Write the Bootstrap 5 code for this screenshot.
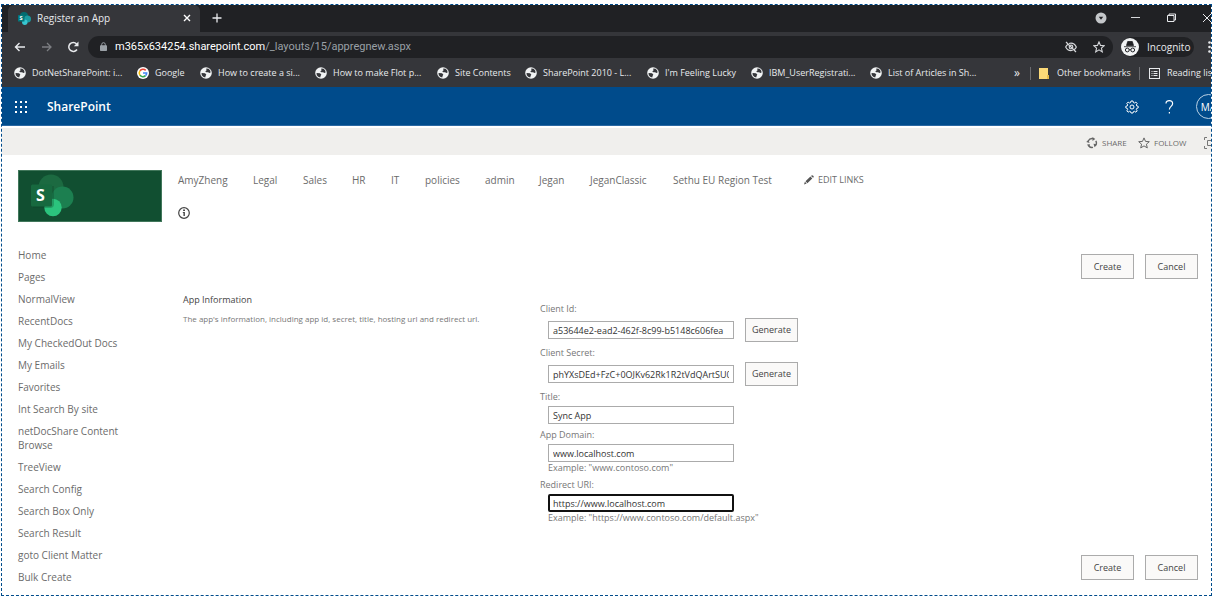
<!DOCTYPE html>
<html lang="en">
<head>
<meta charset="utf-8">
<meta name="viewport" content="width=device-width, initial-scale=1">
<title>Register an App</title>
<link href="https://cdn.jsdelivr.net/npm/bootstrap@5.3.0/dist/css/bootstrap.min.css" rel="stylesheet">
<style>
body{font-family:"Open Sans","Noto Sans",sans-serif;font-size:10px;line-height:14px;color:#6b6b6b;background:#fff}
a{color:inherit;text-decoration:none}
svg{display:block;flex:none}
button{font:inherit;color:inherit}
.icon-btn{border:0;background:none;padding:0;line-height:1}
.window-frame{margin:4px 6px 1px 1px;border:1px dashed #004b8b;overflow:hidden;background:#fff}
.cols{display:grid;align-items:center;white-space:nowrap;flex:none}
/* browser chrome */
.tab-strip{background:#202124;height:27px;color:#e8eaed;padding-bottom:1px}
.page-tab{width:192px;margin-left:6px;margin-bottom:-1px;padding:0 9px 1px 10px;gap:6px;background:#35363a;border-radius:6px 6px 0 0}
.window-tools{grid-template-columns:36px 36px 35px 12px;margin-right:-3px}
.tool-row{background:#35363a;height:29px;color:#e8eaed;padding:0 0 0 12px}
.omnibox{background:#202124;border-radius:11px;height:22px;padding:0 8px 0 8px;font-family:Roboto,"Open Sans",sans-serif;font-size:11px;color:#9aa0a6}
.omnibox b{font-weight:400;color:#fff}
.incognito{background:#202124;border-radius:10px;height:20px;width:73px;margin:0 14px 0 8px}
.bookmark-row{background:#35363a;height:26px;color:#e8eaed;padding:0 0 2px 12px;font-size:9px}
.bookmark-list{grid-template-columns:123px 63px 115px 122px 88px 122px 104px 119px 110px}
.bookmark-list a{display:flex;align-items:center;gap:6px}
.bookmark-end{grid-template-columns:16px 9px 18px 82px 10px 18px 56px;margin-right:-12px}
.bookmark-end .more{font-size:12px}
.divider{width:1px;height:13px;background:#6b6c70}
/* suite bar */
.suite-bar{background:#004b8b;height:39px;border-bottom:1px solid #2a68a3;color:#fff;padding:1px 0 0 13px}
.suite-name{font-size:12px;font-weight:600}
.suite-tools{grid-template-columns:40px 31px 25px;margin-right:-10px}
.avatar{width:25px;height:25px;border:1px solid #b9d0e4;border-radius:50%;font-size:10px}
.ribbon{background:#f0efed;height:27px;margin-top:2px;padding-top:2px;font-size:8px}
.ribbon-tools{grid-template-columns:52px 66px 12px;margin-right:-5px}
/* site */
.site-head{padding:15px 13px 0 16px}
.site-logo{width:144px;height:52px;background:#114f31;border:1px solid #41775b}
.top-links{grid-template-columns:75px 50px 49px 39px 34px 60px 54px 51px 83px 131px auto;margin-top:3px}
.edit-links{font-size:9px}
.site-body{display:grid;grid-template-columns:165px 1fr;padding:26px 13px 11px 16px}
.side-links a{display:block;width:120px;margin-bottom:8px}
.side-links li:last-child a{margin-bottom:0}
.form-area{display:grid;grid-template-columns:357px 1fr}
.form-fields{padding-top:24px}
.form-about{padding-top:15px}
.push-btn{border:1px solid #ababab;background:#faf9f8;color:#444;border-radius:0;height:25px;width:53px;padding:0;font-size:9px;line-height:12px}
.app-title{color:#444;font-size:9px;line-height:12px;margin:0 0 8px;font-weight:400}
.app-note{font-size:8px;line-height:10px;color:#777}
.field{margin-bottom:5px;line-height:12px;font-size:9px;color:#777}
.field label{display:block;margin-bottom:3px}
.entry{display:flex;align-items:center;gap:11px;padding-left:8px}
.entry input{width:186px;height:18px;min-height:0;border:1px solid #ababab;border-radius:0;padding:0 4px;font-size:9px;line-height:14px;color:#333;background:#fff;box-shadow:none}
.entry .push-btn{height:24px}
.entry input:focus{border:2px solid #111;border-radius:2px;padding:0 3px;outline:0;color:#333;box-shadow:none}
.hint{padding-left:8px}
.actions{gap:11px}
.actions-start{padding-top:6px}
.actions-end{margin-top:26px}
</style>
</head>
<body>
<svg width="0" height="0" class="position-absolute" aria-hidden="true">
  <symbol id="globe" viewBox="0 0 12 12"><circle cx="6" cy="6" r="5.800" fill="#f1f3f4"/><path d="M1.500 6.100L5 6.300 6.300 7.600 5.600 8.900 5.200 10.600 3.200 9.800 1.800 8.200ZM6.200 1.400L8.600 1.800 10.200 3.600 10.600 5.600 9.200 6 8.200 5.200 6.300 5.300 5.200 4.300 6.500 3.500Z" fill="#35363a"/></symbol>
</svg>
<div class="window-frame">
  <header>
    <div class="tab-strip d-flex align-items-stretch">
      <div class="page-tab d-flex align-items-center">
        <svg width="13" height="13" viewBox="0 0 13 13"><circle cx="6" cy="4" r="4" fill="#036c70"/><circle cx="9.500" cy="7" r="3.500" fill="#1a9ba1"/><circle cx="6.800" cy="10.200" r="2.700" fill="#37c6d0"/><rect y="3" width="6.500" height="6.500" rx=".6" fill="#03787c"/><text x="1.600" y="8.300" font-size="5.500" font-weight="700" fill="#fff">S</text></svg>
        <span>Register an App</span>
        <button class="icon-btn ms-auto" aria-label="Close tab"><svg width="8" height="8" viewBox="0 0 8 8" stroke="#fff" stroke-width="1.400"><path d="M1 1l6 6M7 1l-6 6"/></svg></button>
      </div>
      <button class="icon-btn ms-2 ps-1" aria-label="New tab"><svg width="10" height="10" viewBox="0 0 10 10" stroke="#e8eaed" stroke-width="1.300"><path d="M5 .5v9M.5 5h9"/></svg></button>
      <div class="window-tools cols ms-auto">
        <button class="icon-btn" aria-label="Search tabs"><svg width="12" height="12" viewBox="0 0 12 12"><circle cx="6" cy="6" r="5.500" fill="#c4c7ca"/><path d="M3.800 4.800h4.400L6 7.800z" fill="#202124"/></svg></button>
        <button class="icon-btn" aria-label="Minimize"><svg width="10" height="10" viewBox="0 0 10 10"><path d="M0 4.500h9" stroke="#d5d7da"/></svg></button>
        <button class="icon-btn" aria-label="Restore"><svg width="10" height="10" viewBox="0 0 10 10" fill="none" stroke="#e8eaed"><path d="M.5 2.500h6.500v6h-6.500zM2 2.500V1h6.500v6H7"/></svg></button>
        <button class="icon-btn" aria-label="Close"><svg width="10" height="10" viewBox="0 0 10 10" stroke="#e8eaed"><path d="M1 1l8 8M9 1L1 9"/></svg></button>
      </div>
    </div>
    <div class="tool-row d-flex align-items-center">
      <button class="icon-btn" aria-label="Back"><svg width="12" height="12" viewBox="0 0 12 12" fill="none" stroke="#e8eaed" stroke-width="1.400"><path d="M11 6H1.500M5.500 2L1.500 6 5.500 10"/></svg></button>
      <button class="icon-btn ms-3" aria-label="Forward"><svg width="10" height="12" viewBox="0 0 10 12" fill="none" stroke="#7c7e82" stroke-width="1.300"><path d="M0 6h9M5 2l4 4-4 4"/></svg></button>
      <button class="icon-btn ms-3 me-2" aria-label="Reload"><svg width="12" height="12" viewBox="0 0 12 12"><path d="M9 8.500A4.500 4.500 0 1 1 8.600 2.900" fill="none" stroke="#e8eaed" stroke-width="1.500"/><path d="M10.500 .6v4.700H5.800z" fill="#e8eaed"/></svg></button>
      <div class="omnibox d-flex align-items-center flex-grow-1">
        <svg class="ms-1" width="7" height="9" viewBox="0 0 7 9"><rect y="3.300" width="7" height="5.700" rx=".7" fill="#9aa0a6"/><path d="M1.700 4V2.500a1.800 1.800 0 0 1 3.600 0V4" fill="none" stroke="#9aa0a6"/></svg>
        <span class="ms-2"><b>m365x634254.sharepoint.com</b>/_layouts/15/appregnew.aspx</span>
        <svg class="ms-auto me-3" width="12" height="12" viewBox="0 0 12 12" fill="none" stroke="#d5d7da" stroke-width="1.200"><path d="M4 2.500C7.500 1.500 10 3.500 11.300 6 10.900 7 10.200 7.800 9.400 8.400M7.800 9.300C4.500 10.300 2 8.500.7 6 1.200 5 1.900 4.200 2.700 3.600M1 1l10 10"/><circle cx="6" cy="6" r="1.800"/></svg>
        <svg width="12" height="12" viewBox="0 0 12 12" fill="none" stroke="#d5d7da" stroke-width="1.100"><path d="M6 .9l1.500 3.500 3.800.3-2.900 2.500.9 3.700L6 8.900 2.700 10.900l.9-3.700L.7 4.700l3.800-.3z"/></svg>
      </div>
      <div class="incognito d-flex align-items-center flex-shrink-0">
        <svg width="18" height="18" viewBox="0 0 18 18"><circle cx="9" cy="9" r="9" fill="#f1f3f4"/><path d="M3 8.700h12M5.500 7.500l1.200-4h4.600l1.200 4z" fill="#202124" stroke="#202124" stroke-width=".8"/><g fill="none" stroke="#202124"><circle cx="6.300" cy="12" r="1.900"/><circle cx="11.700" cy="12" r="1.900"/><path d="M8.200 11.700h1.600"/></g></svg>
        <span class="ms-1 ps-1">Incognito</span>
      </div>
      <svg class="me-n1" width="3" height="12" viewBox="0 0 3 12" fill="#e8eaed"><circle cx="1.500" cy="1.500" r="1.300"/><circle cx="1.500" cy="6" r="1.300"/><circle cx="1.500" cy="10.500" r="1.300"/></svg>
    </div>
    <nav class="bookmark-row d-flex align-items-center" aria-label="Bookmarks">
      <div class="bookmark-list cols">
        <a href="#"><svg width="12" height="12"><use href="#globe"/></svg>DotNetSharePoint: i...</a>
        <a href="#"><svg width="12" height="12" viewBox="0 0 12 12"><circle cx="6" cy="6" r="6" fill="#fff"/><g fill="none" stroke-width="1.600"><path d="M2.900 3.900A3.700 3.700 0 0 1 8.700 3.400" stroke="#ea4335"/><path d="M2.900 8.100a3.700 3.700 0 0 1 0-4.200" stroke="#fbbc05"/><path d="M8.500 8.700a3.700 3.700 0 0 1-5.600-.6" stroke="#34a853"/><path d="M6 6h3.700a3.700 3.700 0 0 1-1.200 2.700" stroke="#4285f4"/></g></svg>Google</a>
        <a href="#"><svg width="12" height="12"><use href="#globe"/></svg>How to create a si...</a>
        <a href="#"><svg width="12" height="12"><use href="#globe"/></svg>How to make Flot p...</a>
        <a href="#"><svg width="12" height="12"><use href="#globe"/></svg>Site Contents</a>
        <a href="#"><svg width="12" height="12"><use href="#globe"/></svg>SharePoint 2010 - L...</a>
        <a href="#"><svg width="12" height="12"><use href="#globe"/></svg>I'm Feeling Lucky</a>
        <a href="#"><svg width="12" height="12"><use href="#globe"/></svg>IBM_UserRegistrati...</a>
        <a href="#"><svg width="12" height="12"><use href="#globe"/></svg>List of Articles in Sh...</a>
      </div>
      <div class="bookmark-end cols ms-auto">
        <span class="more">»</span><span class="divider"></span>
        <svg width="10" height="11" viewBox="0 0 10 11"><path d="M0 0h9v7h1v4H0z" fill="#fbd978"/><path d="M8 7h2v4H8z" fill="#e8bd4d"/></svg>
        <a href="#">Other bookmarks</a><span class="divider"></span>
        <svg width="11" height="11" viewBox="0 0 11 11" fill="none" stroke="#e8eaed"><rect x=".5" y=".5" width="10" height="10"/><path d="M2.500 3.500h1M4.500 3.500h4M2.500 5.500h1M4.500 5.500h4M2.500 7.500h1M4.500 7.500h4"/></svg>
        <a href="#">Reading list</a>
      </div>
    </nav>
  </header>

  <div class="suite-bar d-flex align-items-center">
    <button class="icon-btn" aria-label="App launcher"><svg width="12" height="12" viewBox="0 0 12 12" fill="#fff"><path d="M0 0h2v2H0zM5 0h2v2H5zM10 0h2v2h-2zM0 5h2v2H0zM5 5h2v2H5zM10 5h2v2h-2zM0 10h2v2H0zM5 10h2v2H5zM10 10h2v2h-2z"/></svg></button>
    <a href="#" class="suite-name ms-3 ps-1">SharePoint</a>
    <div class="suite-tools cols ms-auto">
      <button class="icon-btn" aria-label="Settings"><svg width="14" height="14" viewBox="0 0 14 14" fill="none" stroke="#fff"><path d="M6 1h2l.4 1.600 1 .4 1.500-.9 1.300 1.300-.9 1.500.4 1 1.500.4v1.600l-1.500.5-.4 1 .9 1.500-1.300 1.300-1.500-.9-1 .4L8 13H6l-.4-1.300-1-.4-1.500.9-1.300-1.300.9-1.500-.4-1L.8 7.900V6.300l1.500-.4.4-1-.9-1.500 1.300-1.300 1.500.9 1-.4z"/><circle cx="7" cy="7" r="2"/></svg></button>
      <button class="icon-btn" aria-label="Help"><svg width="9" height="14" viewBox="0 0 9 14" fill="none" stroke="#fff" stroke-width="1.200"><path d="M1 3.500C1 1.500 2.600.7 4.200.7 6 .7 7.600 1.800 7.600 3.700 7.600 6.400 4.400 6.500 4.400 9.500"/><path d="M4.400 12v1.500"/></svg></button>
      <a href="#" class="avatar d-flex align-items-center justify-content-center">MA</a>
    </div>
  </div>
  <div class="ribbon d-flex justify-content-end">
    <div class="ribbon-tools cols">
      <a href="#" class="d-flex align-items-center gap-1"><svg width="12" height="12" viewBox="0 0 12 12" fill="none" stroke="#666" stroke-width="1.400"><path d="M2.200 4A4.500 4.500 0 0 1 7 1.600M9.800 3.800a4.500 4.500 0 0 1-.6 5.200M7 10.400a4.500 4.500 0 0 1-4.800-2.200"/><path d="M6.500 0l2.800 1.900L6.500 4zM10.800 7.200l-2.300 3-1-3.500zM.2 5l2.200-2 1.200 3zM1 7.500l3-.2-.8 3z" fill="#666" stroke="none"/></svg>SHARE</a>
      <a href="#" class="d-flex align-items-center gap-1"><svg width="12" height="12" viewBox="0 0 12 12" fill="none" stroke="#666"><path d="M6 .9l1.500 3.500 3.800.3-2.900 2.500.9 3.700L6 8.900 2.700 10.900l.9-3.700L.7 4.700l3.800-.3z"/></svg>FOLLOW</a>
      <button class="icon-btn" aria-label="Focus on content"><svg width="12" height="12" viewBox="0 0 12 12" fill="none" stroke="#777"><path d="M3 .5H.5V3M9 .5h2.500V3M3 11.500H.5V9M9 11.500h2.500V9M3.500 3.500h5v5h-5z"/></svg></button>
    </div>
  </div>

  <div class="site-head d-flex align-items-start">
    <a href="#" class="site-logo flex-shrink-0" aria-label="Site home"><svg width="60" height="50" viewBox="0 0 60 50"><circle cx="32" cy="16" r="12.500" fill="#1c6a41"/><circle cx="43.500" cy="26.500" r="11" fill="#1c7f50"/><circle cx="34" cy="36.500" r="8.700" fill="#2bc47d"/><path d="M14 15h21v18q0 4-4 4H14z" fill="#0d4228" opacity=".3"/><rect x="12" y="13.500" width="21" height="22" rx="1.500" fill="#17693f"/><text x="17" y="30" font-size="16" font-weight="700" fill="#fff">S</text></svg></a>
    <div class="ms-3">
      <nav class="top-links cols" aria-label="Top links">
        <a href="#">AmyZheng</a><a href="#">Legal</a><a href="#">Sales</a><a href="#">HR</a><a href="#">IT</a><a href="#">policies</a><a href="#">admin</a><a href="#">Jegan</a><a href="#">JeganClassic</a><a href="#">Sethu EU Region Test</a>
        <a href="#" class="edit-links d-flex align-items-center gap-1"><svg width="10" height="10" viewBox="0 0 10 10" fill="#555"><path d="M0 9.500l.9-2.700L2.700 8.600zM1.500 6.200L6.400 1.500l1.900 1.900L3.400 8.200zM7 .9q1-1.300 2.200-.2T9 2.700z"/></svg>EDIT LINKS</a>
      </nav>
      <svg class="mt-3 pt-1" width="12" height="16" viewBox="0 0 12 12"><circle cx="6" cy="6" r="5.300" fill="none" stroke="#444" stroke-width="1.200"/><path d="M5.200 2.600h1.700v1.300H5.200zM4.800 4.900h2v4.200h-1.300V5.800h-.7z" fill="#333"/></svg>
    </div>
  </div>

  <div class="site-body">
    <nav aria-label="Site">
      <ul class="side-links list-unstyled m-0">
        <li><a href="#">Home</a></li><li><a href="#">Pages</a></li><li><a href="#">NormalView</a></li><li><a href="#">RecentDocs</a></li><li><a href="#">My CheckedOut Docs</a></li><li><a href="#">My Emails</a></li><li><a href="#">Favorites</a></li><li><a href="#">Int Search By site</a></li><li><a href="#">netDocShare Content Browse</a></li><li><a href="#">TreeView</a></li><li><a href="#">Search Config</a></li><li><a href="#">Search Box Only</a></li><li><a href="#">Search Result</a></li><li><a href="#">goto Client Matter</a></li><li><a href="#">Bulk Create</a></li>
      </ul>
    </nav>
    <main>
      <form onsubmit="return false">
        <div class="actions actions-start d-flex justify-content-end"><button class="btn push-btn">Create</button><button class="btn push-btn" type="button">Cancel</button></div>
        <div class="form-area">
          <div class="form-about">
            <h1 class="app-title">App Information</h1>
            <p class="app-note m-0">The app's information, including app id, secret, title, hosting url and redirect url.</p>
          </div>
          <div class="form-fields">
            <div class="field"><label for="cid">Client Id:</label><div class="entry"><input class="form-control" id="cid" value="a53644e2-ead2-462f-8c99-b5148c606fea"><button class="btn push-btn" type="button">Generate</button></div></div>
            <div class="field"><label for="secret">Client Secret:</label><div class="entry"><input class="form-control" id="secret" value="phYXsDEd+FzC+0OJKv62Rk1R2tVdQArtSU0"><button class="btn push-btn" type="button">Generate</button></div></div>
            <div class="field"><label for="ttl">Title:</label><div class="entry"><input class="form-control" id="ttl" value="Sync App"></div></div>
            <div class="field"><label for="domain">App Domain:</label><div class="entry"><input class="form-control" id="domain" value="www.localhost.com"></div><div class="hint">Example: "www.contoso.com"</div></div>
            <div class="field"><label for="uri">Redirect URI:</label><div class="entry"><input class="form-control" id="uri" value="https://www.localhost.com"></div><div class="hint">Example: "https://www.contoso.com/default.aspx"</div></div>
          </div>
        </div>
        <div class="actions actions-end d-flex justify-content-end"><button class="btn push-btn">Create</button><button class="btn push-btn" type="button">Cancel</button></div>
      </form>
    </main>
  </div>
</div>
<script src="https://cdn.jsdelivr.net/npm/bootstrap@5.3.0/dist/js/bootstrap.bundle.min.js"></script>
<script>
// start with the caret at the end of the redirect address
const uri = document.getElementById('uri');
uri.focus({preventScroll: true});
uri.setSelectionRange(uri.value.length, uri.value.length);
</script>
</body>
</html>
